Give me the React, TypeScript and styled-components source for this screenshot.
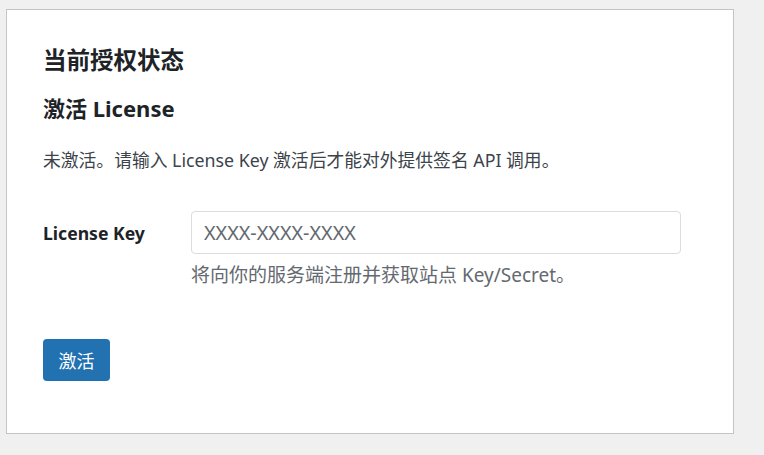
import styled, { createGlobalStyle } from 'styled-components';

const GlobalStyle = createGlobalStyle`
  html, body {
    margin: 0;
    padding: 0;
    background: #f0f0f1;
  }
  body {
    font-family: 'Noto Sans', 'Noto Sans CJK SC', sans-serif;
    color: #3c434a;
  }
`;

const Page = styled.div`
  padding: 9px 0 0 6px;
  width: 764px;
  height: 455px;
  box-sizing: border-box;
`;

const Card = styled.div`
  width: 728px;
  height: 425px;
  box-sizing: border-box;
  background: #fff;
  border: 1px solid #c3c4c7;
  padding: 35px 37px 0 36px;
`;

const Title = styled.h2`
  margin: 0;
  font-size: 23.5px;
  line-height: 30px;
  font-weight: 700;
  color: #1d2327;
`;

const SubTitle = styled.h3`
  margin: 18px 0 0;
  font-size: 22px;
  line-height: 30px;
  font-weight: 700;
  color: #1d2327;
`;

const Description = styled.p`
  margin: 24px 0 0;
  font-size: 17.8px;
  line-height: 26px;
  color: #3c434a;
`;

const FieldRow = styled.div`
  margin-top: 38px;
  display: grid;
  grid-template-columns: 148px 490px;
  align-items: center;
`;

const Label = styled.label`
  font-size: 17.6px;
  font-weight: 700;
  color: #1d2327;
`;

const Input = styled.input`
  height: 43px;
  box-sizing: border-box;
  border: 1px solid #dcdcde;
  border-radius: 4px;
  padding: 0 12px;
  font-family: inherit;
  font-size: 19.8px;
  color: #2c3338;
  outline: none;

  &::placeholder {
    color: #646970;
  }
`;

const Help = styled.p`
  grid-column: 2;
  margin: 8px 0 0;
  font-size: 19px;
  line-height: 26px;
  color: #646970;
  white-space: nowrap;
`;

const Button = styled.button`
  margin-top: 51px;
  width: 67px;
  height: 42px;
  border: none;
  border-radius: 4px;
  background: #2271b1;
  color: #fff;
  font-family: inherit;
  font-size: 18px;
  cursor: pointer;
`;

export default function App() {
  return (
    <Page>
      <GlobalStyle />
      <Card>
        <Title>当前授权状态</Title>
        <SubTitle>激活 License</SubTitle>
        <Description>未激活。请输入 License Key 激活后才能对外提供签名 API 调用。</Description>
        <FieldRow>
          <Label htmlFor='license-key'>License Key</Label>
          <Input id='license-key' placeholder='XXXX-XXXX-XXXX' />
          <Help>将向你的服务端注册并获取站点 Key/Secret。</Help>
        </FieldRow>
        <Button>激活</Button>
      </Card>
    </Page>
  );
}
